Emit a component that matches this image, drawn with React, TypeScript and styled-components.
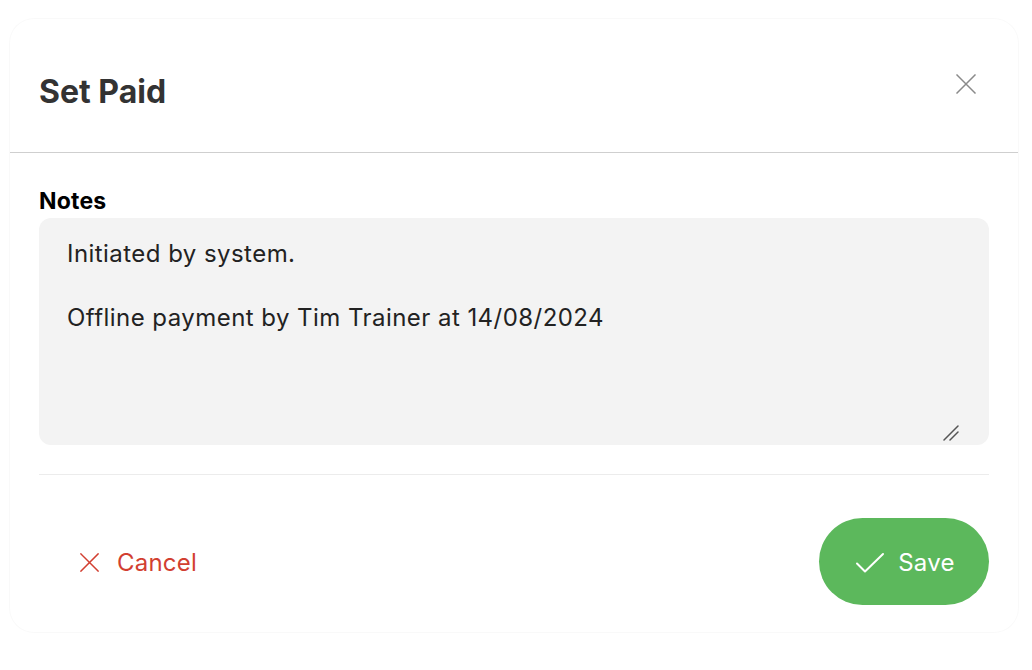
import React from "react";
import styled, { createGlobalStyle } from "styled-components";

const Global = createGlobalStyle`
  html, body { margin: 0; padding: 0; background: #ffffff; }
  body { font-family: Inter, "Noto Sans", sans-serif; }
  * { box-sizing: border-box; }
`;

const Page = styled.div`
  width: 1032px;
  height: 670px;
  padding: 19px 14px 0 10px;
`;

const Modal = styled.div`
  width: 1008px;
  height: 613px;
  background: #fff;
  border-radius: 24px;
  box-shadow: 0 0 0 1px rgba(0, 0, 0, 0.025);
  display: flex;
  flex-direction: column;
`;

const Header = styled.div`
  height: 134px;
  display: flex;
  align-items: flex-start;
  justify-content: space-between;
  padding: 55px 40px 0 29px;
  border-bottom: 1px solid #cfcfcf;
`;

const Title = styled.h1`
  margin: 0;
  font-size: 32px;
  line-height: 36px;
  font-weight: 700;
  color: #333;
`;

const CloseButton = styled.button`
  border: 0;
  background: none;
  padding: 0;
  margin-top: -2px;
  width: 24px;
  height: 24px;
  display: flex;
  align-items: center;
  justify-content: center;
  cursor: pointer;
`;

const Body = styled.div`
  padding: 33px 29px 0 29px;
  display: flex;
  flex-direction: column;
`;

const Label = styled.label`
  font-size: 23px;
  line-height: 30px;
  font-weight: 700;
  letter-spacing: 0.2px;
  color: #000;
  margin-bottom: 2px;
`;

const Field = styled.div`
  position: relative;
  width: 950px;
  height: 227px;
`;

const TextArea = styled.textarea`
  display: block;
  width: 100%;
  height: 100%;
  border: 0;
  outline: none;
  border-radius: 12px;
  background: #f3f3f3;
  padding: 20px 28px;
  font-family: Inter, "Noto Sans", sans-serif;
  font-size: 24px;
  letter-spacing: 0.45px;
  line-height: 32px;
  color: #222;
  resize: none;
`;

const Grip = styled.svg`
  position: absolute;
  right: 30px;
  bottom: 4px;
  pointer-events: none;
`;

const Divider = styled.hr`
  width: 950px;
  margin: 29px 0 0 0;
  border: 0;
  border-top: 1px solid #ececec;
`;

const Footer = styled.div`
  display: flex;
  align-items: center;
  justify-content: space-between;
  padding: 43px 29px 0 29px;
`;

const CancelButton = styled.button`
  border: 0;
  background: none;
  display: flex;
  align-items: center;
  gap: 18px;
  padding: 2px 0 0 41px;
  height: 87px;
  color: #d23f31;
  font-family: Inter, "Noto Sans", sans-serif;
  font-size: 24px;
  letter-spacing: 0.2px;
  cursor: pointer;
`;

const SaveButton = styled.button`
  border: 0;
  background: #5cb85c;
  color: #fff;
  border-radius: 44px;
  width: 170px;
  height: 87px;
  display: flex;
  align-items: center;
  justify-content: center;
  gap: 13px;
  font-family: Inter, "Noto Sans", sans-serif;
  font-size: 24px;
  letter-spacing: 0.3px;
  padding: 2px 0 0 2px;
  cursor: pointer;
`;

const XIcon = ({ color, size, sw }: { color: string; size: number; sw: number }) => (
  <svg width={size} height={size} viewBox="0 0 20 20" fill="none">
    <path d="M1 1L19 19M19 1L1 19" stroke={color} strokeWidth={sw} strokeLinecap="square" />
  </svg>
);

const CheckIcon = () => (
  <svg width="30" height="22" viewBox="0 0 30 22" fill="none">
    <path d="M2 11.5L10 19.5L28 2" stroke="#fff" strokeWidth="2" strokeLinecap="round" strokeLinejoin="round" />
  </svg>
);

export default function App() {
  return (
    <>
      <Global />
      <Page>
        <Modal>
          <Header>
            <Title>Set Paid</Title>
            <CloseButton aria-label="Close">
              <XIcon color="#8a8a8a" size={20} sw={1.5} />
            </CloseButton>
          </Header>
          <Body>
            <Label>Notes</Label>
            <Field>
              <TextArea
                defaultValue={"Initiated by system.\n\nOffline payment by Tim Trainer at 14/08/2024"}
              />
              <Grip width="16" height="16" viewBox="0 0 16 16" fill="none">
                <path d="M1 15L15 1M7 15L15 7" stroke="#555" strokeWidth="1.5" strokeLinecap="round" />
              </Grip>
            </Field>
            <Divider />
          </Body>
          <Footer>
            <CancelButton>
              <XIcon color="#d23f31" size={19} sw={1.6} />
              Cancel
            </CancelButton>
            <SaveButton>
              <CheckIcon />
              Save
            </SaveButton>
          </Footer>
        </Modal>
      </Page>
    </>
  );
}
